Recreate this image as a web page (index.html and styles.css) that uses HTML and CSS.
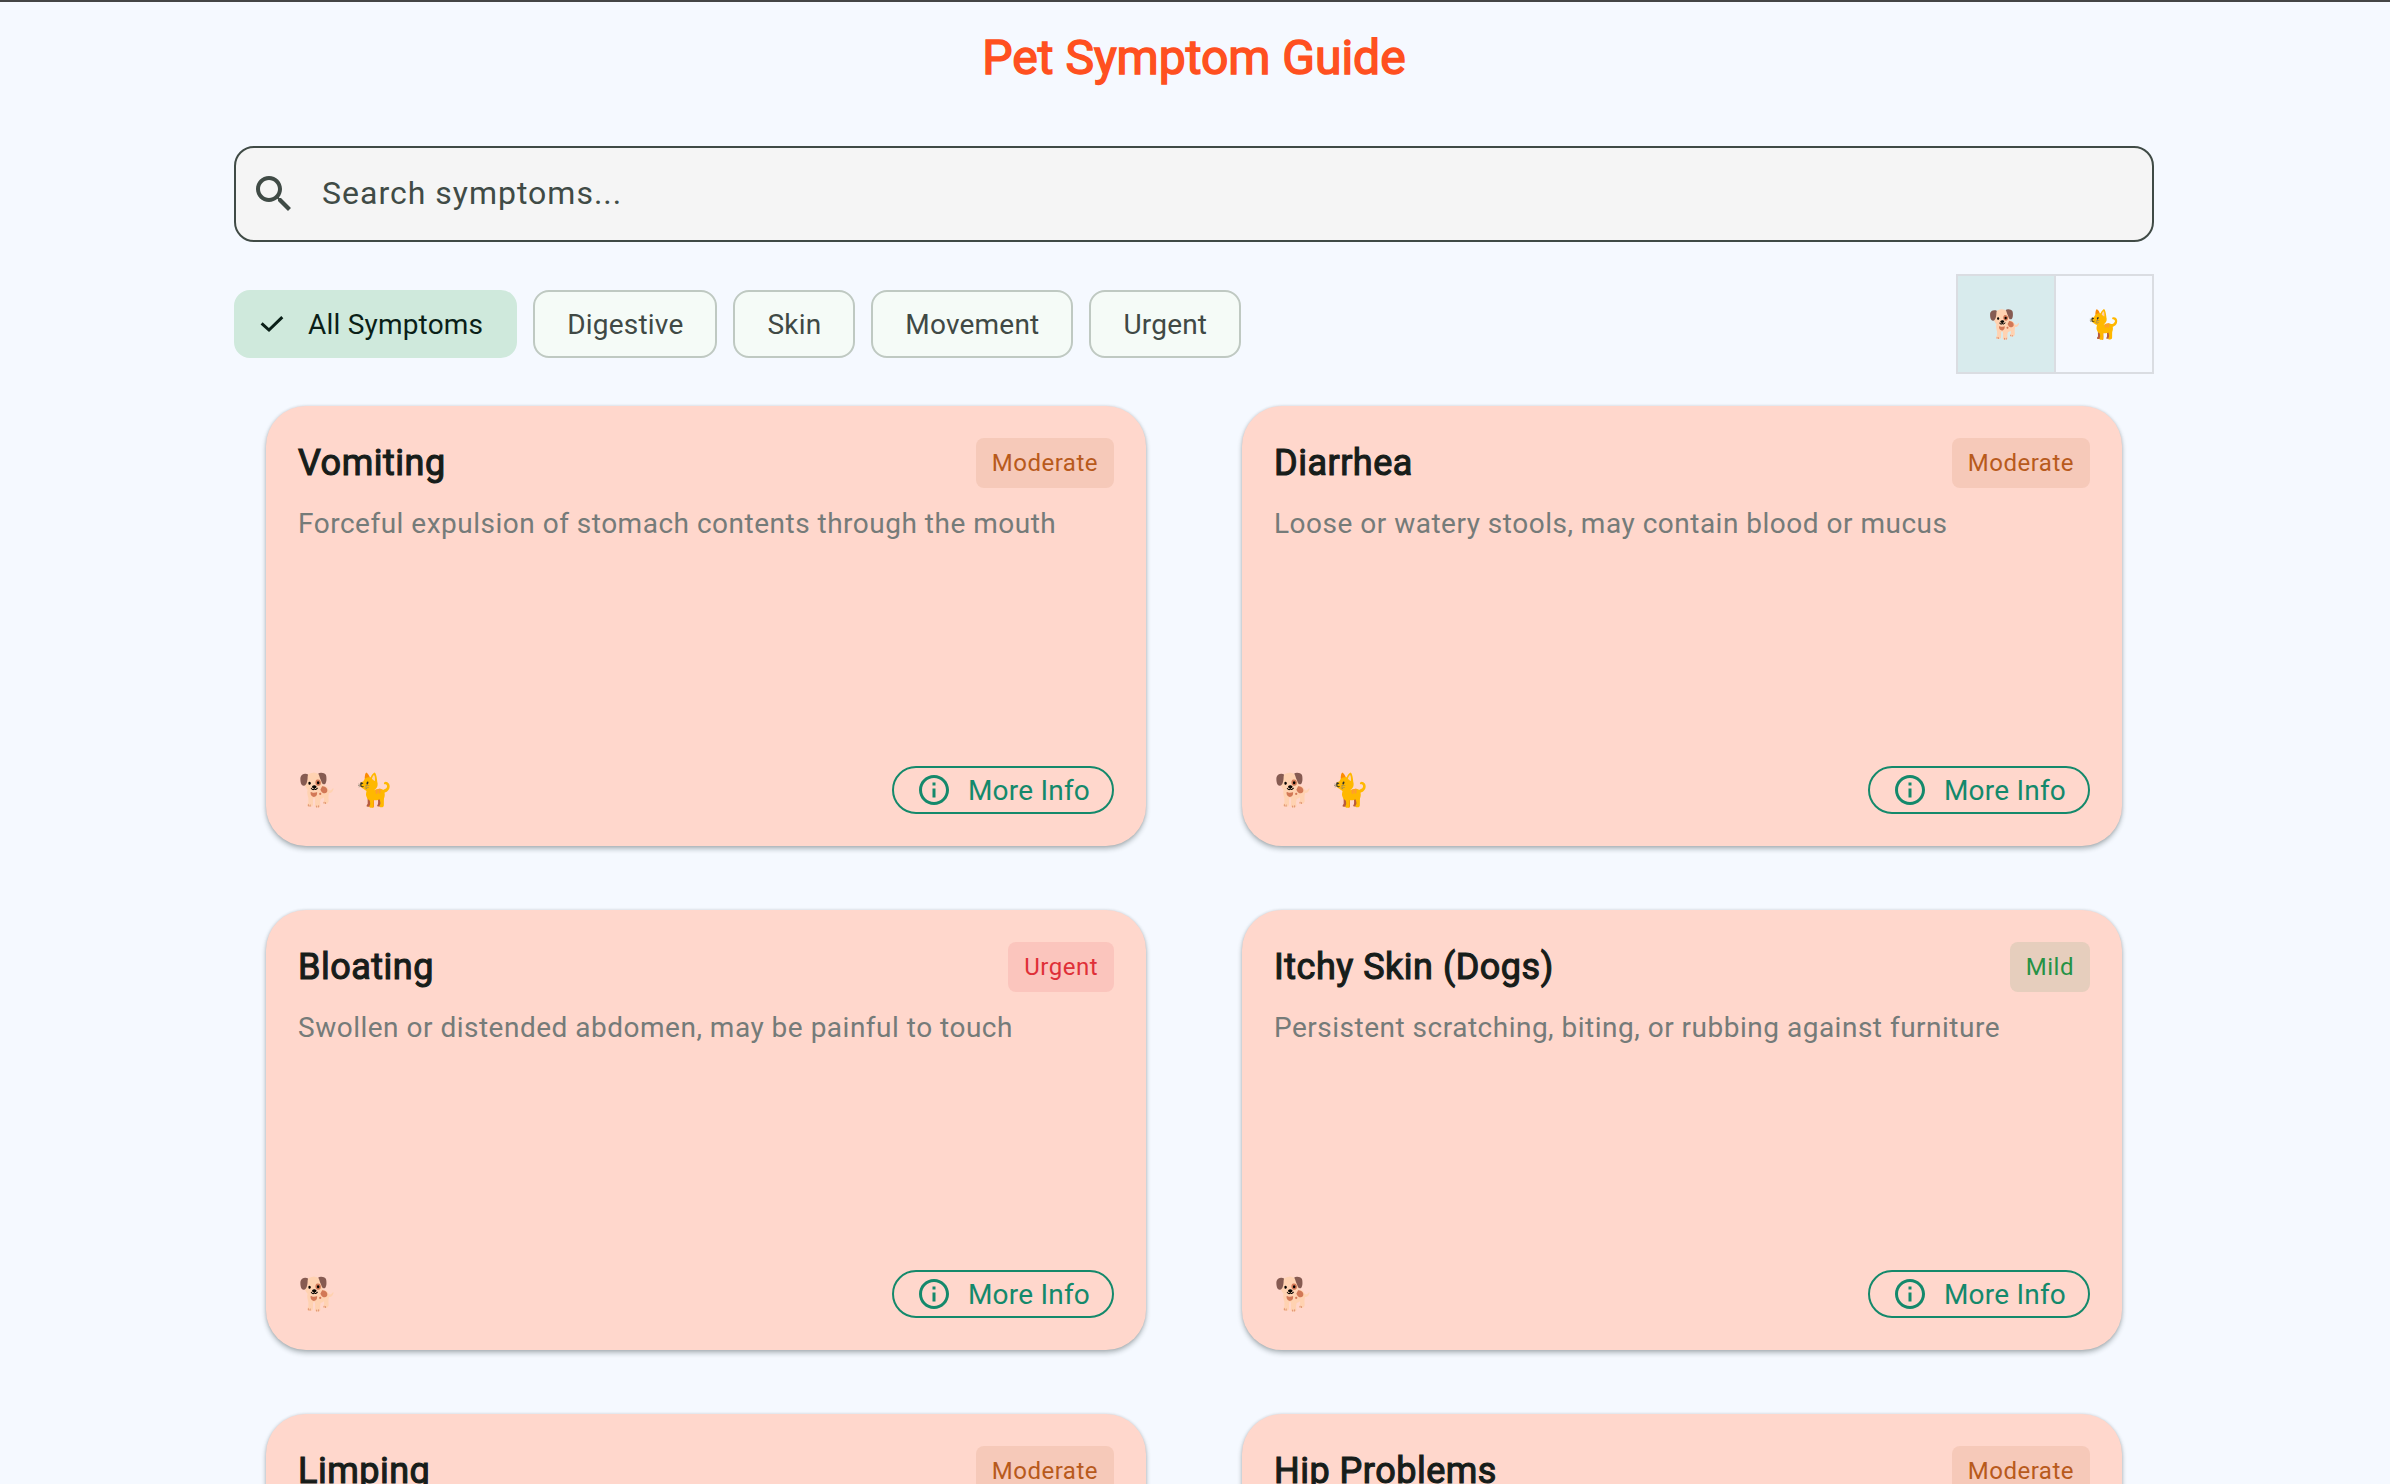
FILE: index.html
```
<!DOCTYPE html>
<html lang="en">
<head>
<meta charset="utf-8">
<title>Pet Symptom Guide</title>
<link rel="stylesheet" href="styles.css">
</head>
<body>
<svg class="sprite" width="0" height="0" aria-hidden="true">
  <symbol id="info" viewBox="0 0 24 24"><path d="M11 7h2v2h-2zm0 4h2v6h-2zm1-9C6.48 2 2 6.48 2 12s4.48 10 10 10 10-4.480 10-10S17.520 2 12 2zm0 18c-4.410 0-8-3.590-8-8s3.590-8 8-8 8 3.590 8 8-3.590 8-8 8z"/></symbol>
</svg>
<header class="app-bar"><h1 class="app-title">Pet Symptom Guide</h1></header>
<main class="page">
  <label class="search">
    <svg class="search-icon" viewBox="0 0 24 24"><path d="M15.500 14h-.790l-.280-.270C15.410 12.590 16 11.110 16 9.500 16 5.910 13.090 3 9.500 3S3 5.910 3 9.500 5.910 16 9.500 16c1.610 0 3.090-.590 4.230-1.570l.270.280v.790l5 4.990L20.490 19l-4.990-5zm-6 0C7.010 14 5 11.990 5 9.500S7.010 5 9.500 5 14 7.010 14 9.500 11.990 14 9.500 14z"/></svg>
    <span class="search-hint">Search symptoms...</span>
  </label>
  <div class="filters">
    <div class="chips">
      <button class="chip chip-selected"><svg class="check" viewBox="0 0 24 18"><path d="M1.600 8.300 9 15 22.300 2.200"/></svg>All Symptoms</button>
      <button class="chip">Digestive</button>
      <button class="chip">Skin</button>
      <button class="chip">Movement</button>
      <button class="chip">Urgent</button>
    </div>
    <div class="species">
      <button class="species-option species-active">🐕</button>
      <button class="species-option">🐈</button>
    </div>
  </div>
  <section class="cards">
    <article class="card">
      <div class="card-head"><h2 class="card-title">Vomiting</h2><span class="badge moderate">Moderate</span></div>
      <p class="card-text">Forceful expulsion of stomach contents through the mouth</p>
      <div class="card-foot"><div class="pets"><span>🐕</span><span>🐈</span></div><button class="more"><svg class="more-icon"><use href="#info"/></svg>More Info</button></div>
    </article>
    <article class="card">
      <div class="card-head"><h2 class="card-title">Diarrhea</h2><span class="badge moderate">Moderate</span></div>
      <p class="card-text">Loose or watery stools, may contain blood or mucus</p>
      <div class="card-foot"><div class="pets"><span>🐕</span><span>🐈</span></div><button class="more"><svg class="more-icon"><use href="#info"/></svg>More Info</button></div>
    </article>
    <article class="card">
      <div class="card-head"><h2 class="card-title">Bloating</h2><span class="badge urgent">Urgent</span></div>
      <p class="card-text">Swollen or distended abdomen, may be painful to touch</p>
      <div class="card-foot"><div class="pets"><span>🐕</span></div><button class="more"><svg class="more-icon"><use href="#info"/></svg>More Info</button></div>
    </article>
    <article class="card">
      <div class="card-head"><h2 class="card-title">Itchy Skin (Dogs)</h2><span class="badge mild">Mild</span></div>
      <p class="card-text">Persistent scratching, biting, or rubbing against furniture</p>
      <div class="card-foot"><div class="pets"><span>🐕</span></div><button class="more"><svg class="more-icon"><use href="#info"/></svg>More Info</button></div>
    </article>
    <article class="card">
      <div class="card-head"><h2 class="card-title">Limping</h2><span class="badge moderate">Moderate</span></div>
    </article>
    <article class="card">
      <div class="card-head"><h2 class="card-title">Hip Problems</h2><span class="badge moderate">Moderate</span></div>
    </article>
  </section>
</main>
</body>
</html>
```
FILE: styles.css
```
* { box-sizing: border-box; }
body {
  margin: 0;
  height: 1484px;
  overflow: hidden;
  border-top: 2px solid #444546;
  background: #f5f9ff;
  font-family: Roboto, "Noto Color Emoji", sans-serif;
  font-size: 28px;
  color: #171d1a;
}
button {
  font: inherit;
  letter-spacing: 0.2px;
  margin: 0;
  white-space: nowrap;
}
h1, h2, p { margin: 0; font-weight: 400; }
.sprite { display: block; }

.app-bar {
  height: 112px;
  padding-right: 2px;
  display: flex;
  align-items: center;
  justify-content: center;
}
.app-title {
  font-size: 48px;
  line-height: 56px;
  color: #ff5020;
  -webkit-text-stroke: 1.5px #ff5020;
}

.page { width: 1920px; margin: 32px 0 0 234px; }

.search {
  display: flex;
  align-items: center;
  gap: 24px;
  height: 96px;
  padding-left: 14px;
  border: 2px solid #404b46;
  border-radius: 20px;
  background: #f5f5f5;
  color: #404b46;
}
.search-icon { width: 48px; height: 48px; fill: currentColor; }
.search-hint { padding-bottom: 2px; font-size: 32px; letter-spacing: 1px; }

.filters {
  display: flex;
  align-items: center;
  justify-content: space-between;
  margin-top: 32px;
}
.chips { display: flex; gap: 16px; }
.chip {
  display: flex;
  align-items: center;
  height: 68px;
  padding: 0 32px;
  border: 2px solid #bfc9c2;
  border-radius: 16px;
  background: #f5fbf7;
  color: #404945;
}
.chip-selected {
  padding-left: 24px;
  border-color: #cfe9dc;
  background: #cfe9dc;
  color: #0a1f17;
}
.check {
  width: 24px;
  height: 18px;
  margin-right: 24px;
  fill: none;
  stroke: currentColor;
  stroke-width: 3;
}
.species {
  display: flex;
  width: 198px;
  height: 100px;
  border: 2px solid #dadde2;
}
.species-option {
  flex: 1;
  padding: 0;
  border: 0;
  background: none;
  color: #000;
}
.species-option + .species-option { border-left: 2px solid #dadde2; flex: 0 0 98px; }
.species-active { background: #d8ebed; }

.cards {
  display: grid;
  grid-template-columns: 1fr 1fr;
  grid-auto-rows: 440px;
  gap: 64px 96px;
  padding: 32px 32px 0;
}
.card {
  display: flex;
  flex-direction: column;
  padding: 32px;
  border-radius: 40px;
  background: #ffd7cc;
  box-shadow: 0 3px 5px rgba(20, 35, 35, 0.3), 0 0 3px rgba(20, 35, 35, 0.14);
}
.card-head { display: flex; align-items: center; justify-content: space-between; height: 50px; }
.card-title {
  font-size: 36px;
  letter-spacing: 0.5px;
  -webkit-text-stroke: 1.125px currentColor;
}
.badge {
  padding: 8px 16px;
  border-radius: 8px;
  font-size: 24px;
  line-height: 34px;
  letter-spacing: 0.5px;
}
.moderate { background: #f6c9b9; color: #b85a1c; }
.urgent { background: #fbc5bd; color: #df3038; }
.mild { background: #e6cebd; color: #259245; }
.card-text {
  margin-top: 16px;
  line-height: 40px;
  letter-spacing: 0.5px;
  color: #757b79;
}
.card-foot { display: flex; align-items: center; justify-content: space-between; margin-top: auto; height: 48px; }
.pets { display: flex; gap: 17px; font-size: 32px; }
.more {
  display: flex;
  align-items: center;
  gap: 16px;
  height: 48px;
  padding: 0 22px;
  border: 2px solid #14896b;
  border-radius: 24px;
  background: none;
  color: #14896b;
}
.more-icon { width: 36px; height: 36px; fill: currentColor; }
```
